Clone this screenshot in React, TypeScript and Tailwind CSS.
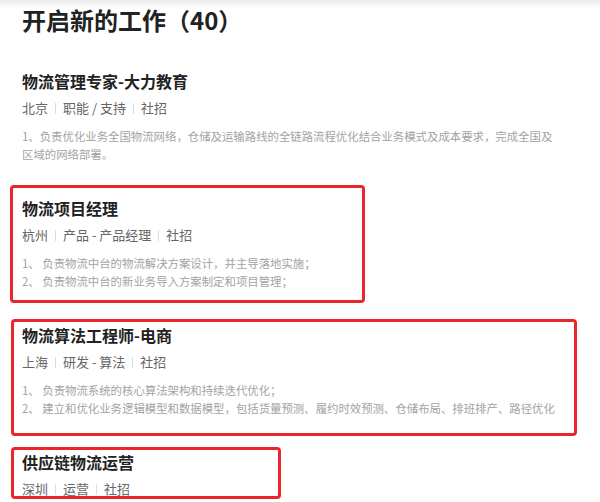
type Job = {
  title: string;
  meta: string[];
  desc: string[];
  mark?: string;
};

const jobs: Job[] = [
  {
    title: "物流管理专家-大力教育",
    meta: ["北京", "职能 / 支持", "社招"],
    desc: [
      "1、负责优化业务全国物流网络，仓储及运输路线的全链路流程优化结合业务模式及成本要求，完成全国及",
      "区域的网络部署。",
    ],
  },
  {
    title: "物流项目经理",
    meta: ["杭州", "产品 - 产品经理", "社招"],
    desc: ["1、 负责物流中台的物流解决方案设计，并主导落地实施；", "2、 负责物流中台的新业务导入方案制定和项目管理；"],
    mark: "top-[-11px] left-[-12px] w-[355px] h-[118px]",
  },
  {
    title: "物流算法工程师-电商",
    meta: ["上海", "研发 - 算法", "社招"],
    desc: [
      "1、 负责物流系统的核心算法架构和持续迭代优化；",
      "2、 建立和优化业务逻辑模型和数据模型，包括货量预测、履约时效预测、仓储布局、排班排产、路径优化",
    ],
    mark: "top-[-4px] left-[-11px] w-[566px] h-[117px]",
  },
  {
    title: "供应链物流运营",
    meta: ["深圳", "运营", "社招"],
    desc: [],
    mark: "top-[-3px] left-[-11px] w-[270px] h-[52px]",
  },
];

const JobItem = ({ job }: { job: Job }) => (
  <div className="relative pb-[33px]">
    {job.mark && (
      <div className={`absolute ${job.mark} border-[3px] border-[#e8262b] rounded-[4px] pointer-events-none`} />
    )}
    <h3 className="text-[16px] leading-6 font-bold text-[#222]">{job.title}</h3>
    <div className="mt-[5px] flex items-center text-[13px] leading-5 text-[#666] whitespace-pre">
      {job.meta.map((m, i) => (
        <span key={i} className="flex items-center">
          {i > 0 && <span className="mx-[7px] w-px h-[11px] bg-[#dcdcdc]" />}
          {m}
        </span>
      ))}
    </div>
    {job.desc.length > 0 && (
      <div className="mt-[9px] text-[11.4px] leading-[18px] text-[#a3a3a3] whitespace-nowrap">
        {job.desc.map((line, i) => (
          <p key={i}>{line}</p>
        ))}
      </div>
    )}
  </div>
);

export default function App() {
  return (
    <div className="relative w-[600px] h-[502px] overflow-hidden bg-white font-['Noto_Sans_CJK_SC',sans-serif]">
      <div className="absolute top-0 left-0 right-0 h-[9px] bg-gradient-to-b from-[#ececec] to-transparent pointer-events-none" />
      <div className="px-[22px] pt-[4px]">
        <h1 className="text-[24px] leading-8 font-bold text-[#222]">开启新的工作（40）</h1>
        <div className="mt-[33px]">
          {jobs.map((job, i) => (
            <JobItem key={i} job={job} />
          ))}
        </div>
      </div>
    </div>
  );
}
